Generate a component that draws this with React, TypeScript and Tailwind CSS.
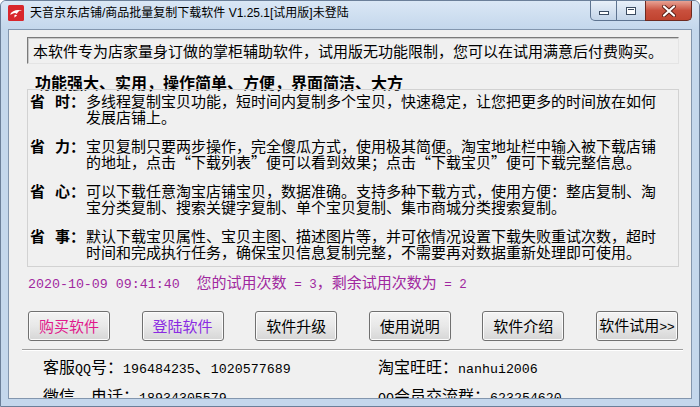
import React from 'react';

const CJK = "font-['Noto_Sans_CJK_SC',sans-serif]";

const rows = [
  {
    a: '省',
    b: '时',
    lines: [
      '多线程复制宝贝功能，短时间内复制多个宝贝，快速稳定，让您把更多的时间放在如何',
      '发展店铺上。',
    ],
  },
  {
    a: '省',
    b: '力',
    lines: [
      '宝贝复制只要两步操作，完全傻瓜方式，使用极其简便。淘宝地址栏中输入被下载店铺',
      '的地址，点击“下载列表”便可以看到效果；点击“下载宝贝”便可下载完整信息。',
    ],
  },
  {
    a: '省',
    b: '心',
    lines: [
      '可以下载任意淘宝店铺宝贝，数据准确。支持多种下载方式，使用方便：整店复制、淘',
      '宝分类复制、搜索关键字复制、单个宝贝复制、集市商城分类搜索复制。',
    ],
  },
  {
    a: '省',
    b: '事',
    lines: [
      '默认下载宝贝属性、宝贝主图、描述图片等，并可依情况设置下载失败重试次数，超时',
      '时间和完成执行任务，确保宝贝信息复制完整，不需要再对数据重新处理即可使用。',
    ],
  },
];

const buttons = [
  { label: '购买软件', color: 'text-[#e0198c]' },
  { label: '登陆软件', color: 'text-[#8a2be2]' },
  { label: '软件升级', color: 'text-black' },
  { label: '使用说明', color: 'text-black' },
  { label: '软件介绍', color: 'text-black' },
  { label: '软件试用>>', color: 'text-black' },
];

// ascii runs get the mono face, everything else stays CJK
function Mixed({ text, mono }: { text: string; mono: string }) {
  const parts = text.split(/([\x20-\x7e]+)/).filter(Boolean);
  return (
    <>
      {parts.map((p, i) =>
        /^[\x20-\x7e]+$/.test(p) ? (
          <span key={i} className={mono}>
            {p}
          </span>
        ) : (
          <span key={i}>{p}</span>
        )
      )}
    </>
  );
}

function AppIcon() {
  return (
    <svg width="16" height="16" viewBox="0 0 16 16">
      <rect x="0" y="0" width="16" height="16" rx="1.5" fill="#d8262c" />
      <path d="M2 9.5 C4 5.5 9 4 14 5.5 C11 5.8 9.5 7 8.8 9 C8 7.8 6.5 7.6 5 8.6 C4 9.2 3 9.6 2 9.5 Z" fill="#fff" />
      <path d="M6.5 10 C7.5 9.4 8.6 9.6 9 10.8 C8 11.2 7.2 11.8 6.6 12.8 C6.4 11.8 6.3 10.8 6.5 10 Z" fill="#fff" />
      <circle cx="11.6" cy="6.4" r="0.7" fill="#d8262c" />
    </svg>
  );
}

function Controls() {
  return (
    <div className="ml-auto mr-[7px] flex h-[20px] self-start">
      <div className="flex w-[27px] items-center justify-center rounded-bl-[5px] border border-t-0 border-[#5d7390] bg-gradient-to-b from-[#e8f0f9] to-[#c3d4e8]">
        <div className="mt-[5px] h-[4px] w-[10px] border border-[#3b4b60] bg-white" />
      </div>
      <div className="flex w-[28px] items-center justify-center border-b border-[#5d7390] bg-gradient-to-b from-[#e8f0f9] to-[#c3d4e8]">
        <div className="h-[8px] w-[10px] border border-[#3b4b60] bg-white p-[1px]">
          <div className="h-full w-full border-t border-[#3b4b60]" />
        </div>
      </div>
      <div className="flex w-[47px] items-center justify-center rounded-br-[5px] border border-t-0 border-[#6e2a20] bg-gradient-to-b from-[#e7a294] via-[#c9503e] to-[#c0432f]">
        <svg width="14" height="12" viewBox="0 0 14 12">
          <path d="M2 1.5 L12 10.5 M12 1.5 L2 10.5" stroke="#5a2018" strokeWidth="4" strokeLinecap="round" />
          <path d="M2 1.5 L12 10.5 M12 1.5 L2 10.5" stroke="#fff" strokeWidth="2.2" strokeLinecap="round" />
        </svg>
      </div>
    </div>
  );
}

export default function App() {
  return (
    <div className="h-[407px] w-[700px] bg-white">
      <div className="flex h-full w-full flex-col overflow-hidden rounded-t-[6px] border border-[#6b7f99] bg-[#c4d7ec]">
        {/* title bar */}
        <div className="flex h-[28px] shrink-0 items-start bg-gradient-to-b from-[#dae7f5] to-[#c4d7ec]">
          <div className="ml-[7px] mt-[4px]">
            <AppIcon />
          </div>
          <div className="ml-[6px] mt-[4px] whitespace-nowrap text-[12px] leading-[16px] text-black font-['Liberation_Sans','Noto_Sans_CJK_SC',sans-serif]">
            天音京东店铺/商品批量复制下载软件 V1.25.1[试用版]未登陆
          </div>
          <Controls />
        </div>

        <div className="flex min-h-0 flex-1">
          <div className="w-[7px] shrink-0" />
          {/* client area */}
          <div className={`flex min-w-0 flex-1 flex-col overflow-hidden border border-[#8396ae] bg-[#f0f0f0] text-black ${CJK}`}>
            <div className="ml-[18px] mt-[7px] flex h-[27px] w-[652px] shrink-0 items-center border border-b-[#e4e4e4] border-l-[#7a7a7a] border-r-[#e4e4e4] border-t-[#7a7a7a] pl-[5px] shadow-[inset_1px_1px_0_#c8c8c8] text-[15px] leading-[16px] whitespace-nowrap">
              本软件专为店家量身订做的掌柜辅助软件，试用版无功能限制，您可以在试用满意后付费购买。
            </div>

            <div className="ml-[26px] mt-[11px] h-[14px] shrink-0 whitespace-nowrap text-[16px] font-bold leading-[14px]">
              功能强大、实用，操作简单、方便，界面简洁、大方
            </div>

            <div className="ml-[18px] flex h-[178px] w-[652px] shrink-0 flex-col gap-[13px] border border-[#d2d2d2] pl-[2px] pt-[3px]">
              {rows.map((r) => (
                <div key={r.b} className="flex text-[15px] leading-[16px]">
                  <div className="flex w-[56px] shrink-0 font-bold">
                    <span>{r.a}</span>
                    <span className="ml-[10px]">{r.b}</span>
                    <span>：</span>
                  </div>
                  <div className="whitespace-nowrap">
                    {r.lines.map((l) => (
                      <div key={l}>{l}</div>
                    ))}
                  </div>
                </div>
              ))}
            </div>

            <div className="ml-[19px] mt-[7px] shrink-0 whitespace-pre text-[15px] leading-[16px] text-[#a0289f]">
              <span className="font-['Liberation_Mono',monospace] text-[13.3px]">2020-10-09 09:41:40</span>
              <span className="ml-[17px]">您的试用次数</span>
              <span className="font-['Liberation_Mono',monospace] text-[12.5px]"> = 3</span>
              <span>，剩余试用次数为</span>
              <span className="font-['Liberation_Mono',monospace] text-[12.5px]"> = 2</span>
            </div>

            <div className="ml-[19px] mt-[18px] flex w-[650px] shrink-0 justify-between">
              {buttons.map((b) => (
                <button
                  key={b.label}
                  className={`h-[30px] w-[82px] rounded-[3px] border border-[#707070] bg-gradient-to-b from-[#f4f4f4] via-[#e8e8e8] to-[#d6d6d6] text-[15px] leading-[16px] shadow-[inset_0_0_0_1px_#fbfbfb] ${b.color}`}
                >
                  <Mixed text={b.label} mono="font-['Liberation_Sans',sans-serif] text-[13px]" />
                </button>
              ))}
            </div>

            <div className="ml-[13px] mt-[8px] h-[2px] w-[661px] shrink-0 border-t border-[#a0a0a0] bg-white" />

            <div className="mt-[6px] flex shrink-0 text-[16px] leading-[18px] whitespace-nowrap">
              <div className="ml-[34px] w-[335px]">
                <Mixed text="客服QQ号：196484235、1020577689" mono="font-['Liberation_Mono',monospace] text-[13.3px]" />
              </div>
              <div>
                <Mixed text="淘宝旺旺：nanhui2006" mono="font-['Liberation_Mono',monospace] text-[13.3px]" />
              </div>
            </div>
            <div className="mt-[7px] flex shrink-0 text-[16px] leading-[18px] whitespace-nowrap">
              <div className="ml-[34px] w-[335px]">
                <Mixed text="微信、电话：18934305579" mono="font-['Liberation_Mono',monospace] text-[13.3px]" />
              </div>
              <div>
                <Mixed text="QQ会员交流群：623254620" mono="font-['Liberation_Mono',monospace] text-[13.3px]" />
              </div>
            </div>
          </div>
          <div className="w-[7px] shrink-0" />
        </div>
        <div className="h-[7px] shrink-0" />
      </div>
    </div>
  );
}
